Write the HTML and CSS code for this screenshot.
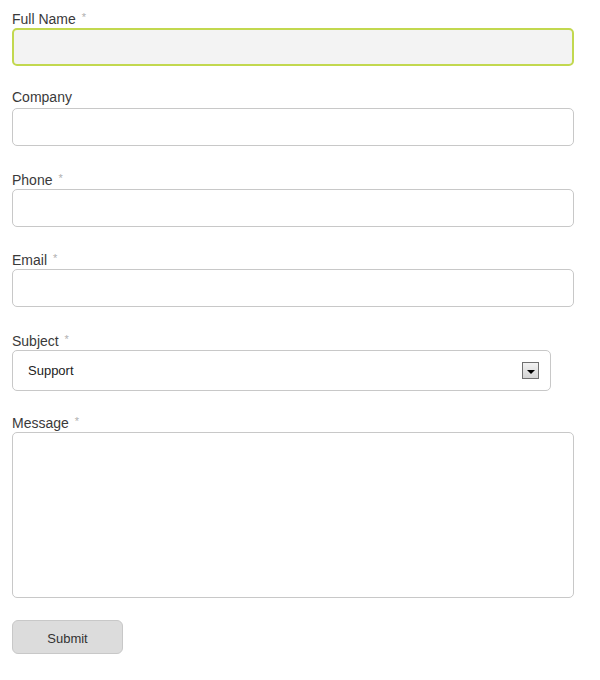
FILE: index.html
```html
<!DOCTYPE html>
<html>
<head>
<meta charset="utf-8">
<link rel="stylesheet" href="styles.css">
</head>
<body>
<form class="form">
  <div class="field">
    <label class="label">Full Name <span class="req">*</span></label>
    <input class="input input-focus" type="text">
  </div>
  <div class="field field-plus">
    <label class="label">Company</label>
    <input class="input" type="text">
  </div>
  <div class="field">
    <label class="label">Phone <span class="req">*</span></label>
    <input class="input" type="text">
  </div>
  <div class="field field-plus">
    <label class="label">Email <span class="req">*</span></label>
    <input class="input" type="text">
  </div>
  <div class="field field-minus">
    <label class="label">Subject <span class="req">*</span></label>
    <div class="select">
      <span class="select-text">Support</span>
      <span class="select-arrow"><span class="tri"></span></span>
    </div>
  </div>
  <div class="field">
    <label class="label">Message <span class="req">*</span></label>
    <textarea class="input textarea"></textarea>
  </div>
  <button class="submit" type="button">Submit</button>
</form>
</body>
</html>
```
FILE: styles.css
```css
html, body {
  margin: 0;
  padding: 0;
  background: #fff;
}
body {
  font-family: "Liberation Sans", Arial, sans-serif;
  color: #333;
}
.form {
  padding: 9px 0 0 12px;
  width: 562px;
  display: flex;
  flex-direction: column;
}
.field {
  display: flex;
  flex-direction: column;
  margin-bottom: 23px;
}
.field-plus {
  margin-bottom: 24px;
}
.field-minus {
  margin-bottom: 22px;
}
.label {
  font-size: 14px;
  line-height: 17px;
  height: 17px;
  margin-bottom: 2px;
  color: #3a3a3a;
}
.req {
  color: #b0b0b0;
  font-size: 11px;
  vertical-align: 3px;
  margin-left: 2px;
}
.input {
  box-sizing: border-box;
  width: 562px;
  height: 38px;
  margin: 0;
  border: 1px solid #c8c8c8;
  border-radius: 5px;
  background: #fff;
  font-family: inherit;
  outline: none;
  display: block;
}
.input-focus {
  border: 2px solid #c2d84f;
  background: #f3f3f3;
}
.textarea {
  height: 166px;
  resize: none;
}
.select {
  box-sizing: border-box;
  width: 539px;
  height: 41px;
  border: 1px solid #c8c8c8;
  border-radius: 5px;
  background: #fff;
  display: flex;
  align-items: center;
  justify-content: space-between;
  padding: 0 11px 0 15px;
}
.select-text {
  font-size: 13px;
  color: #222;
}
.select-arrow {
  box-sizing: border-box;
  width: 17px;
  height: 17px;
  border: 1px solid #707070;
  background: linear-gradient(#f2f2f2, #d4d4d4);
  display: flex;
  align-items: center;
  justify-content: center;
}
.tri {
  width: 0;
  height: 0;
  border-left: 4px solid transparent;
  border-right: 4px solid transparent;
  border-top: 4px solid #000;
  margin-top: 2px;
}
.submit {
  box-sizing: border-box;
  width: 111px;
  height: 34px;
  margin-top: -1px;
  border: 1px solid #c8c8c8;
  border-radius: 6px;
  background: #dcdcdc;
  color: #333;
  font-family: "Liberation Sans", Arial, sans-serif;
  font-size: 13px;
  padding: 2px 0 0 0;
}
```
